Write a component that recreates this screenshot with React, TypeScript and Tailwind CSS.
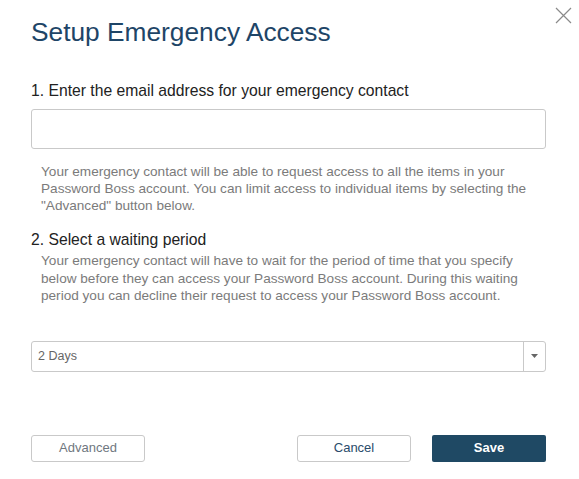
import React from 'react';

const EmergencyAccessDialog: React.FC = () => {
    return (
        <div className="relative w-[579px] h-[479px] bg-white overflow-hidden font-['Liberation_Sans',Arial,sans-serif]">
            {/* Close */}
            <button className="absolute left-[553px] top-[5px] w-[20px] h-[20px] flex items-center justify-center">
                <svg width="17" height="17" viewBox="0 0 17 17" fill="none" stroke="#8a8a8a" strokeWidth="1.2">
                    <path d="M1 1 L16 16 M16 1 L1 16" />
                </svg>
            </button>

            <div className="flex flex-col px-[31px] pr-[33px]">
                {/* Title */}
                <h1 className="mt-[17px] text-[26.3px] leading-[30px] text-[#1e4567]">Setup Emergency Access</h1>

                {/* Step 1 */}
                <h2 className="mt-[35px] text-[15.7px] leading-[18px] text-[#222]">
                    1. Enter the email address for your emergency contact
                </h2>
                <input
                    type="text"
                    className="mt-[9px] h-[40px] w-full border border-[#c9c9c9] rounded-[3px] px-2 outline-none"
                />
                <p className="mt-[14px] pl-[10px] text-[13.6px] leading-[17px] text-[#7b7b7b] whitespace-nowrap">
                    Your emergency contact will be able to request access to all the items in your
                    <br />
                    Password Boss account. You can limit access to individual items by selecting the
                    <br />
                    "Advanced" button below.
                </p>

                {/* Step 2 */}
                <h2 className="mt-[17px] text-[15.7px] leading-[18px] text-[#222]">2. Select a waiting period</h2>
                <p className="mt-[3px] pl-[10px] text-[13.6px] leading-[17.5px] text-[#7b7b7b] whitespace-nowrap">
                    Your emergency contact will have to wait for the period of time that you specify
                    <br />
                    below before they can access your Password Boss account. During this waiting
                    <br />
                    period you can decline their request to access your Password Boss account.
                </p>

                {/* Select */}
                <div className="mt-[36px] h-[31px] w-full flex border border-[#c9c9c9] rounded-[3px]">
                    <span className="flex-1 flex items-center pl-[6px] text-[12.5px] text-[#666]">2 Days</span>
                    <div className="w-[22px] border-l border-[#c9c9c9] flex items-center justify-center">
                        <svg width="7" height="4" viewBox="0 0 7 4">
                            <path d="M0 0 L7 0 L3.5 4 Z" fill="#666" />
                        </svg>
                    </div>
                </div>

                {/* Actions */}
                <div className="mt-[63px] flex items-center">
                    <button className="w-[114px] h-[27px] border border-[#c9c9c9] rounded-[3px] text-[13px] text-[#6f7780]">
                        Advanced
                    </button>
                    <div className="flex-1" />
                    <button className="w-[114px] h-[27px] border border-[#c9c9c9] rounded-[3px] text-[13px] text-[#2a4c6b]">
                        Cancel
                    </button>
                    <button className="ml-[21px] w-[114px] h-[27px] bg-[#1f4964] rounded-[2px] text-[13px] font-bold text-white">
                        Save
                    </button>
                </div>
            </div>
        </div>
    );
};

export default function App() {
    return <EmergencyAccessDialog />;
}
